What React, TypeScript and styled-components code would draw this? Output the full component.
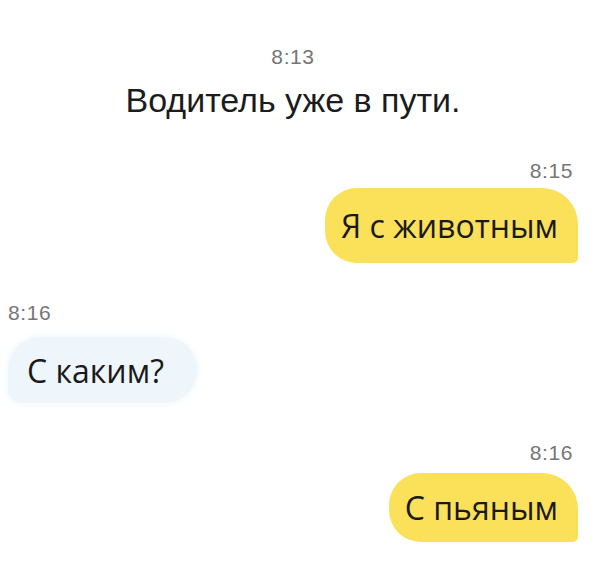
import React, { FC } from 'react';
import styled, { createGlobalStyle, css } from 'styled-components';

type Side = 'left' | 'right' | 'center';

const GlobalStyle = createGlobalStyle`
  html, body {
    margin: 0;
    padding: 0;
    background: #ffffff;
  }
`;

const Page = styled.div`
  width: 604px;
  height: 571px;
  box-sizing: border-box;
  padding: 46px 26px 0 8px;
  display: flex;
  flex-direction: column;
  overflow: hidden;
`;

const Time = styled.div<{ $side: Side; $gap: number }>`
  margin-top: ${(p) => p.$gap}px;
  font-family: 'Liberation Sans', Arial, sans-serif;
  font-size: 21px;
  line-height: 21px;
  color: #767676;
  letter-spacing: 0.6px;
  align-self: ${(p) =>
    p.$side === 'left' ? 'flex-start' : p.$side === 'right' ? 'flex-end' : 'center'};
  padding-right: ${(p) => (p.$side === 'right' ? 5 : 0)}px;
`;

const Notice = styled.div`
  margin-top: 16px;
  align-self: center;
  font-family: 'Liberation Sans', Arial, sans-serif;
  font-size: 34px;
  line-height: 34px;
  color: #1c1c1c;
`;

const Bubble = styled.div<{ $side: 'left' | 'right'; $gap: number; $height: number }>`
  margin-top: ${(p) => p.$gap}px;
  height: ${(p) => p.$height}px;
  display: flex;
  align-items: center;
  box-sizing: border-box;
  font-family: 'Open Sans', 'Noto Sans', sans-serif;
  font-size: 32px;
  color: #1a1a1a;
  white-space: nowrap;
  ${(p) =>
    p.$side === 'right'
      ? css`
          align-self: flex-end;
          background: #fbe05a;
          border-radius: 32px 36px 5px 32px;
          padding: 0 20px 0 16px;
        `
      : css`
          align-self: flex-start;
          background: #eef6fb;
          border-radius: 33px 33px 33px 14px;
          padding: 0 33px 0 19px;
          box-shadow: 0 0 6px 2px #f3f9fc;
        `}
`;

const App: FC = () => {
  return (
    <>
      <GlobalStyle />
      <Page>
        <Time $side="center" $gap={0}>8:13</Time>
        <Notice>Водитель уже в пути.</Notice>

        <Time $side="right" $gap={43}>8:15</Time>
        <Bubble $side="right" $gap={7} $height={75}>Я с животным</Bubble>

        <Time $side="left" $gap={39}>8:16</Time>
        <Bubble $side="left" $gap={14} $height={66}>С каким?</Bubble>

        <Time $side="right" $gap={39}>8:16</Time>
        <Bubble $side="right" $gap={10} $height={69}>С пьяным</Bubble>
      </Page>
    </>
  );
};

export default App;
